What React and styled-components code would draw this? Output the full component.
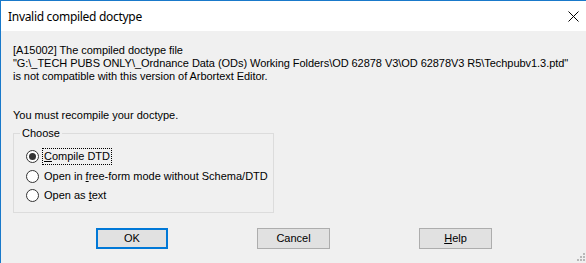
import React from "react";
import styled, { createGlobalStyle } from "styled-components";

const GlobalStyle = createGlobalStyle`
  html, body {
    margin: 0;
    padding: 0;
    background: #f0f0f0;
    overflow: hidden;
  }
`;

const Window = styled.div`
  box-sizing: border-box;
  width: 586px;
  height: 263px;
  display: flex;
  flex-direction: column;
  border-top: 1px solid #1979ca;
  border-left: 1px solid #1979ca;
  font-family: "Liberation Sans", Arial, sans-serif;
  font-size: 11px;
  color: #000;
`;

const TitleBar = styled.div`
  height: 30px;
  flex: none;
  background: #fff;
  display: flex;
  align-items: center;
  justify-content: space-between;
  padding: 0 7px 0 7px;
`;

const Title = styled.span`
  font-family: "Noto Sans", "Segoe UI", sans-serif;
  font-size: 12px;
  letter-spacing: -0.3px;
  color: #000;
`;

const CloseButton = styled.span`
  display: flex;
  width: 11px;
  height: 11px;
`;

const Body = styled.div`
  position: relative;
  flex: 1;
  background: #f0f0f0;
  padding: 13px 0 0 12px;
`;

const Message = styled.p`
  margin: 0;
  line-height: 13px;
  letter-spacing: -0.05px;
  white-space: pre;
`;

const Prompt = styled.p`
  margin: 26px 0 0 0;
  line-height: 13px;
`;

const GroupBox = styled.fieldset`
  box-sizing: border-box;
  width: 261px;
  margin: 5px 0 0 0;
  padding: 7px 0 6px 12px;
  border: 1px solid #dcdcdc;
  min-width: 0;
`;

const Legend = styled.legend`
  margin-left: -6px;
  padding: 0 2px;
  line-height: 13px;
`;

const RadioRow = styled.label`
  display: flex;
  align-items: center;
  height: 19.5px;
  gap: 3px;
`;

const RadioCircle = styled.span`
  box-sizing: border-box;
  width: 13px;
  height: 13px;
  border-radius: 50%;
  border: 1px solid #333;
  background: #fff;
  display: flex;
  align-items: center;
  justify-content: center;
  flex: none;

  &::after {
    content: "";
    display: ${(p) => (p.$checked ? "block" : "none")};
    width: 7px;
    height: 7px;
    border-radius: 50%;
    background: #333;
  }
`;

const RadioLabel = styled.span`
  line-height: 13px;
  padding: 1px 1px;
  border: 1px dotted ${(p) => (p.$focused ? "#000" : "transparent")};
`;

const Key = styled.u`
  text-decoration: underline;
  text-underline-offset: 1px;
`;

const ButtonRow = styled.div`
  display: flex;
  gap: 89px;
  margin: 15px 0 0 83px;
`;

const Button = styled.button`
  box-sizing: border-box;
  width: ${(p) => (p.$default ? "72px" : "73px")};
  height: 21px;
  padding: 0;
  background: #e1e1e1;
  border: ${(p) => (p.$default ? "2px solid #0078d7" : "1px solid #adadad")};
  font-family: "Liberation Sans", Arial, sans-serif;
  font-size: 11px;
  color: #000;
`;

const SizeGrip = styled.svg`
  position: absolute;
  right: 1px;
  bottom: 2px;
`;

const radios = [
  { key: "C", rest: "ompile DTD", pre: "", checked: true },
  { pre: "Open in ", key: "f", rest: "ree-form mode without Schema/DTD" },
  { pre: "Open as ", key: "t", rest: "ext" },
];

export default function App() {
  return (
    <>
      <GlobalStyle />
      <Window>
        <TitleBar>
          <Title>Invalid compiled doctype</Title>
          <CloseButton>
            <svg width="11" height="11" viewBox="0 0 11 11">
              <path d="M0.5 0.5 L10.5 10.5 M10.5 0.5 L0.5 10.5" stroke="#000" strokeWidth="1" />
            </svg>
          </CloseButton>
        </TitleBar>
        <Body>
          <Message>
            {`[A15002] The compiled doctype file
"G:\\_TECH PUBS ONLY\\_Ordnance Data (ODs) Working Folders\\OD 62878 V3\\OD 62878V3 R5\\Techpubv1.3.ptd"
is not compatible with this version of Arbortext Editor.`}
          </Message>
          <Prompt>You must recompile your doctype.</Prompt>
          <GroupBox>
            <Legend>Choose</Legend>
            {radios.map((r, i) => (
              <RadioRow key={i}>
                <RadioCircle $checked={r.checked} />
                <RadioLabel $focused={r.checked}>
                  {r.pre}
                  <Key>{r.key}</Key>
                  {r.rest}
                </RadioLabel>
              </RadioRow>
            ))}
          </GroupBox>
          <ButtonRow>
            <Button $default>OK</Button>
            <Button>Cancel</Button>
            <Button>
              <Key>H</Key>elp
            </Button>
          </ButtonRow>
          <SizeGrip width="8" height="8" viewBox="0 0 8 8">
            <g fill="#b8b8b8">
              <rect x="6" y="0" width="2" height="2" />
              <rect x="3" y="3" width="2" height="2" />
              <rect x="6" y="3" width="2" height="2" />
              <rect x="0" y="6" width="2" height="2" />
              <rect x="3" y="6" width="2" height="2" />
              <rect x="6" y="6" width="2" height="2" />
            </g>
          </SizeGrip>
        </Body>
      </Window>
    </>
  );
}
